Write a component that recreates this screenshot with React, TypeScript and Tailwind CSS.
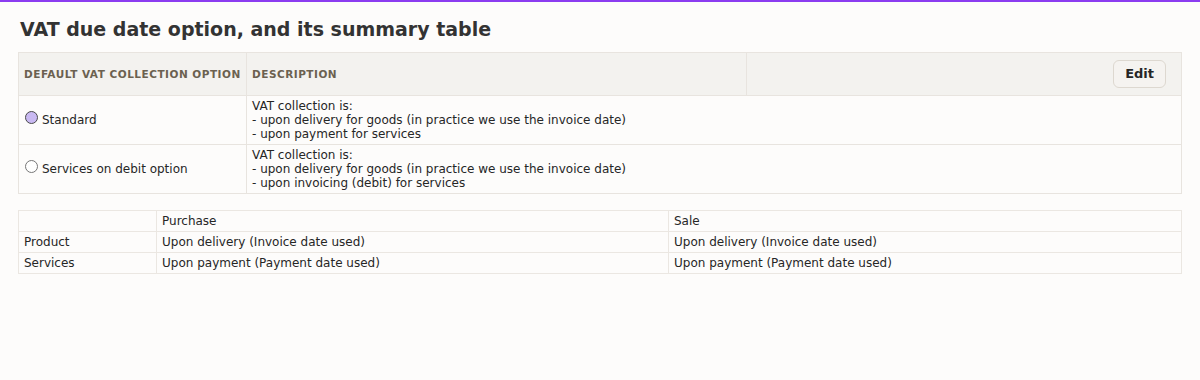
import React from "react";

export default function App() {
  const font = { fontFamily: '"DejaVu Sans", sans-serif' };
  return (
    <div className="min-h-[380px] w-[1200px] bg-[#fdfcfb] border-t-2 border-[#8b3cf0] text-[#262626]" style={font}>
      <div className="px-[18px] pt-[15px]">
        <h1 className="text-[19px] font-bold leading-[24px] text-[#333] pl-[2px] mb-[11px]">
          VAT due date option, and its summary table
        </h1>
        <table className="w-full border-collapse text-[12px] leading-[14px]">
          <thead>
            <tr className="bg-[#f3f2ef] h-[43px]">
              <th className="w-[228px] whitespace-nowrap border border-[#e8e4df] px-[5px] text-left text-[10.5px] font-bold uppercase tracking-[0.5px] text-[#6b6150]">
                Default VAT collection option
              </th>
              <th className="w-[500px] border border-[#e8e4df] px-[5px] text-left text-[10.5px] font-bold uppercase tracking-[0.5px] text-[#6b6150]">
                Description
              </th>
              <th className="border border-[#e8e4df] pr-[15px] text-right">
                <button className="h-[28px] px-[11px] rounded-[6px] border border-[#ddd8d0] bg-[#f5f3f0] text-[13px] font-bold text-[#262626]">
                  Edit
                </button>
              </th>
            </tr>
          </thead>
          <tbody>
            <tr className="h-[49px]">
              <td className="border border-[#e8e4df] px-[6px] align-middle">
                <span className="inline-flex items-center gap-[4px]">
                  <span className="inline-block w-[13px] h-[13px] rounded-full border border-[#4a4a4a] bg-[#c9b9f2] -mt-[4px]" />
                  <span>Standard</span>
                </span>
              </td>
              <td className="border border-[#e8e4df] px-[5px] py-[2px] align-middle" colSpan={2}>
                VAT collection is:<br />- upon delivery for goods (in practice we use the invoice date)<br />- upon payment for services
              </td>
            </tr>
            <tr className="h-[49px]">
              <td className="border border-[#e8e4df] px-[6px] align-middle">
                <span className="inline-flex items-center gap-[4px]">
                  <span className="inline-block w-[13px] h-[13px] rounded-full border border-[#767676] bg-white -mt-[4px]" />
                  <span>Services on debit option</span>
                </span>
              </td>
              <td className="border border-[#e8e4df] px-[5px] py-[2px] align-middle" colSpan={2}>
                VAT collection is:<br />- upon delivery for goods (in practice we use the invoice date)<br />- upon invoicing (debit) for services
              </td>
            </tr>
          </tbody>
        </table>

        <table className="w-full border-collapse text-[12px] leading-[14px] mt-[16px]">
          <tbody>
            <tr className="h-[21px]">
              <td className="w-[138px] border border-[#ebe7e2] px-[5px]"></td>
              <td className="w-[512px] border border-[#ebe7e2] px-[5px]">Purchase</td>
              <td className="border border-[#ebe7e2] px-[5px]">Sale</td>
            </tr>
            <tr className="h-[21px]">
              <td className="border border-[#ebe7e2] px-[5px]">Product</td>
              <td className="border border-[#ebe7e2] px-[5px]">Upon delivery (Invoice date used)</td>
              <td className="border border-[#ebe7e2] px-[5px]">Upon delivery (Invoice date used)</td>
            </tr>
            <tr className="h-[21px]">
              <td className="border border-[#ebe7e2] px-[5px]">Services</td>
              <td className="border border-[#ebe7e2] px-[5px]">Upon payment (Payment date used)</td>
              <td className="border border-[#ebe7e2] px-[5px]">Upon payment (Payment date used)</td>
            </tr>
          </tbody>
        </table>
      </div>
    </div>
  );
}
